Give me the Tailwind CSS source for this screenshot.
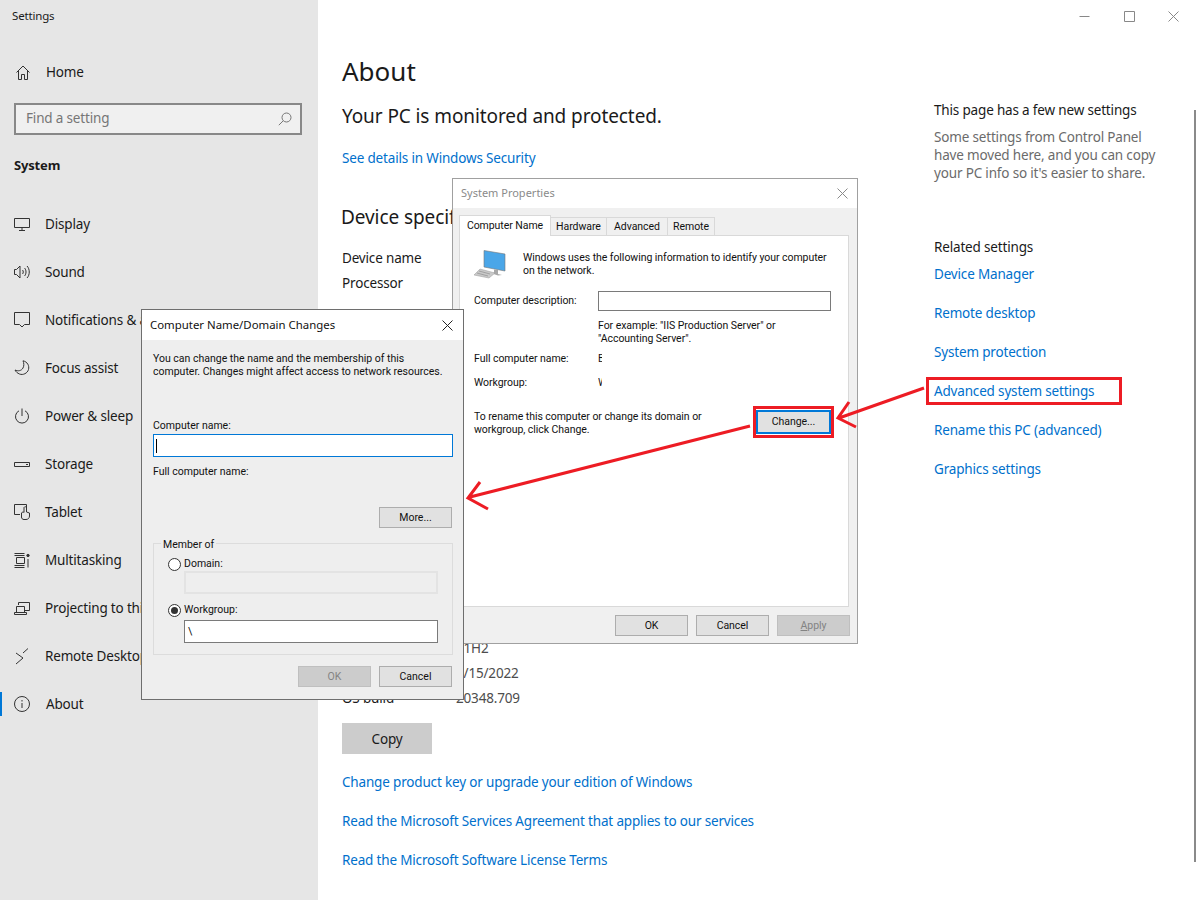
<!DOCTYPE html>
<html lang="en">
<head>
    <meta charset="UTF-8">
    <title>Settings - About</title>
    <script src="https://cdn.jsdelivr.net/npm/@tailwindcss/browser@4"></script>
</head>
<body class="relative w-[1197px] h-[900px] overflow-hidden flex bg-white text-[#1a1a1a] font-['Noto_Sans',sans-serif]">

    <!-- sidebar -->
    <aside class="w-[318px] h-[900px] shrink-0 bg-[#e6e6e6] text-[13.5px] tracking-[-0.17px]">
        <div class="h-[32px] pl-[12px] flex items-center text-[11.5px]">Settings</div>
        <div class="mt-[16px] h-[48px] pl-[16px] flex items-center gap-[16px]">
            <svg width="14" height="15" viewBox="0 0 14 15" fill="none" stroke="#333"><path d="M.5 7.5 7 1l6.5 6.5M2.5 6v8.5h3v-5h3v5h3V6"/></svg>
            <span>Home</span>
        </div>
        <div class="mt-[7px] ml-[14px] w-[288px] h-[32px] border-2 border-[#888] bg-[#f0f0f0] flex items-center justify-between pl-[10px] pr-[8px] text-[#767676]">
            <span class="-mt-[1px]">Find a setting</span>
            <svg width="14" height="14" viewBox="0 0 14 14" fill="none" stroke="#777"><circle cx="8.5" cy="5.5" r="4.5"/><path d="M5.2 8.8.8 13.2"/></svg>
        </div>
        <div class="mt-[21px] h-[20px] pl-[14px] flex items-center font-bold text-[13px]">System</div>
        <nav class="mt-[24px] flex flex-col">
            <a class="h-[48px] pl-[14px] flex items-center gap-[15px]">
                <svg width="16" height="13" viewBox="0 0 16 13" fill="none" stroke="#333"><path d="M.5.5h15v9H.5zM8 9.5v3M5 12.5h6"/></svg>
                <span>Display</span>
            </a>
            <a class="h-[48px] pl-[14px] flex items-center gap-[14px]">
                <svg width="17" height="14" viewBox="0 0 17 14" fill="none" stroke="#333"><path d="M.5 4.5h2L6 1v12L2.5 9.500h-2zM8.500 5c1 1 1 3 0 4M10.500 3c2 2 2 6 0 8M13 1c3 3 3 9 0 12"/></svg>
                <span>Sound</span>
            </a>
            <a class="h-[48px] pl-[14px] flex items-center gap-[14px] whitespace-nowrap">
                <svg width="17" height="16" viewBox="0 0 17 16" fill="none" stroke="#333"><path d="M.5.5h15v12h-5L8 15l-2.500-2.500h-5z"/></svg>
                <span>Notifications &amp; actions</span>
            </a>
            <a class="h-[48px] pl-[14px] flex items-center gap-[15px]">
                <svg width="16" height="16" viewBox="0 0 16 16" fill="none" stroke="#333"><path d="M9 .8c4.500 1 6.500 5 5.500 8.700-1 3.700-5.500 6-9 4.500C3.500 13.200 1.800 11.800 1 10c3 1.500 6.500.8 8-2 1.200-2.200 1-5-.0-7.200z"/></svg>
                <span>Focus assist</span>
            </a>
            <a class="h-[48px] pl-[14px] flex items-center gap-[15px]">
                <svg width="16" height="16" viewBox="0 0 16 16" fill="none" stroke="#333"><path d="M8 .5V8M5 2.800a6.500 6.500 0 1 0 6 0"/></svg>
                <span>Power &amp; sleep</span>
            </a>
            <a class="h-[48px] pl-[14px] flex items-center gap-[15px]">
                <svg width="16" height="7" viewBox="0 0 16 7" fill="none" stroke="#333"><path d="M.5 1.500h15v4H.5zM12 3.500h2"/></svg>
                <span>Storage</span>
            </a>
            <a class="h-[48px] pl-[14px] flex items-center gap-[14px]">
                <svg width="17" height="16" viewBox="0 0 17 16" fill="none" stroke="#333"><path d="M6 10.500H.5V.5h12v4M7.500 13V9c1-1.500 2-1 2.500-.5V3.500c.5-1 2-1 2.500 0V8l3 1v3c0 2-1.500 3.500-3.500 3.500h-2c-1.500 0-2.500-1-2.500-2.500z"/></svg>
                <span>Tablet</span>
            </a>
            <a class="h-[48px] pl-[14px] flex items-center gap-[15px]">
                <svg width="16" height="15" viewBox="0 0 16 15" fill="none" stroke="#333"><path d="M.5.500h10M.5 14.500h10M2.500 4.500h8v6h-8zM.5 2.500h10M.5 12.500h10M14 6v8.500"/><circle cx="14" cy="2.500" r="1.200" fill="#333"/></svg>
                <span>Multitasking</span>
            </a>
            <a class="h-[48px] pl-[14px] flex items-center gap-[15px] whitespace-nowrap">
                <svg width="16" height="13" viewBox="0 0 16 13" fill="none" stroke="#333"><path d="M4.500 3V.5h11v8H11M2.500 4.500h8v6h-8zM.5 12.500h12v-2H.5z"/></svg>
                <span>Projecting to this PC</span>
            </a>
            <a class="h-[48px] pl-[14px] flex items-center gap-[15px] whitespace-nowrap">
                <svg width="16" height="17" viewBox="0 0 16 17" fill="none" stroke="#333"><path d="m2 5 7 5-7 6M14 .5 9 5"/></svg>
                <span>Remote Desktop</span>
            </a>
            <a class="relative h-[48px] pl-[14px] flex items-center gap-[16px]">
                <span class="absolute left-0 top-[12px] w-[2px] h-[24px] bg-[#0078d7]"></span>
                <svg width="16" height="16" viewBox="0 0 16 16" fill="none" stroke="#333"><circle cx="8" cy="8" r="7.500"/><path d="M8 7v5M8 4v1.500"/></svg>
                <span>About</span>
            </a>
        </nav>
    </aside>

    <!-- main -->
    <main class="flex-1 flex text-[13.5px] tracking-[-0.17px]">
        <section class="w-[616px] shrink-0 pl-[24px] pt-[47px]">
            <h1 class="h-[48px] flex items-center text-[26px] tracking-normal">About</h1>
            <p class="mt-[5px] h-[32px] flex items-center text-[19px] tracking-[-0.09px]">Your PC is monitored and protected.</p>
            <a class="mt-[14px] h-[24px] flex items-center text-[#0070cc]">See details in Windows Security</a>
            <h2 class="mt-[31px] h-[32px] -ml-[1px] flex items-center text-[19px] tracking-[-0.09px]">Device specifications</h2>
            <div class="mt-[13px] h-[25px] flex items-center">Device name</div>
            <div class="h-[25px] flex items-center">Processor</div>
            <div class="mt-[340px] h-[25px] flex items-center"><span class="w-[114px]">Version</span><span class="text-[#4d4d4d]">21H2</span></div>
            <div class="h-[25px] flex items-center"><span class="w-[114px]">Installed on</span><span class="text-[#4d4d4d]">5/15/2022</span></div>
            <div class="h-[25px] flex items-center"><span class="w-[114px]">OS build</span><span class="text-[#4d4d4d]">20348.709</span></div>
            <button class="mt-[12px] w-[90px] h-[31px] pt-[1px] bg-[#cccccc] flex items-center justify-center">Copy</button>
            <a class="mt-[16px] h-[24px] flex items-center text-[#0070cc]">Change product key or upgrade your edition of Windows</a>
            <a class="mt-[15px] h-[24px] flex items-center text-[#0070cc]">Read the Microsoft Services Agreement that applies to our services</a>
            <a class="mt-[15px] h-[24px] flex items-center text-[#0070cc]">Read the Microsoft Software License Terms</a>
        </section>
        <section class="flex-1 pt-[100px]">
            <div class="h-[20px] flex items-center">This page has a few new settings</div>
            <p class="mt-[8px] leading-[18px] text-[#6b6b6b] w-[240px]">Some settings from Control Panel have moved here, and you can copy your PC info so it's easier to share.</p>
            <div class="mt-[55px] h-[20px] flex items-center">Related settings</div>
            <div class="mt-[5px] flex flex-col gap-[15px] text-[#0070cc]">
                <a class="h-[24px] flex items-center">Device Manager</a>
                <a class="h-[24px] flex items-center">Remote desktop</a>
                <a class="h-[24px] flex items-center">System protection</a>
                <a class="h-[24px] flex items-center">Advanced system settings</a>
                <a class="h-[24px] flex items-center">Rename this PC (advanced)</a>
                <a class="h-[24px] flex items-center">Graphics settings</a>
            </div>
        </section>
    </main>

    <!-- window controls + scrollbar -->
    <div class="absolute right-[1px] top-0 h-[32px] w-[134px] flex items-center text-[#777]">
        <div class="w-[45px] flex justify-center"><svg width="11" height="11" fill="none" stroke="#888"><path d="M.5 5.500h10"/></svg></div>
        <div class="w-[45px] flex justify-center"><svg width="11" height="11" fill="none" stroke="#888"><path d="M.5.500h10v10H.5z"/></svg></div>
        <div class="w-[45px] flex justify-center"><svg width="11" height="11" fill="none" stroke="#888"><path d="m.5.500 10 10M10.500.500l-10 10"/></svg></div>
    </div>
    <div class="absolute left-[1194px] top-[110px] w-[2px] h-[752px] bg-[#8a8a8a]"></div>

    <!-- System Properties -->
    <div class="absolute left-[452px] top-[178px] w-[406px] h-[466px] border border-[#a0a0a0] bg-[#f0f0f0] text-[10.5px] tracking-[-0.05px] text-[#111] font-['Roboto',sans-serif]">
        <div class="h-[29px] bg-white flex items-center justify-between pl-[8px] pr-[9px] text-[11px] tracking-normal text-[#8a8a8a] font-['Noto_Sans',sans-serif]">
            <span>System Properties</span>
            <svg width="11" height="11" fill="none" stroke="#8a8a8a"><path d="m.5.500 10 10M10.500.500l-10 10"/></svg>
        </div>
        <div class="px-[6px] pt-[7px]">
            <div class="flex items-end h-[21px] relative z-10 -mb-[1px]">
                <div class="w-[92px] h-[21px] bg-white border border-b-0 border-[#d9d9d9] flex items-center justify-center">Computer Name</div>
                <div class="w-[56px] h-[19px] bg-[#f0f0f0] border border-l-0 border-[#d9d9d9] flex items-center justify-center">Hardware</div>
                <div class="w-[61px] h-[19px] bg-[#f0f0f0] border border-l-0 border-[#d9d9d9] flex items-center justify-center">Advanced</div>
                <div class="w-[47px] h-[19px] bg-[#f0f0f0] border border-l-0 border-[#d9d9d9] flex items-center justify-center">Remote</div>
            </div>
            <div class="w-[390px] h-[372px] bg-white border border-[#d9d9d9] pl-[14px] pt-[14px]">
                <div class="flex leading-[13px]">
                    <svg class="w-[32px] h-[29px] shrink-0" viewBox="0 0 32 29">
                        <path d="M10 .500 31 4v17L10 17z" fill="#4aa6e8" stroke="#777" stroke-width=".6"/>
                        <path d="M24 20v4l4 1-4 .5-6-2 2-1v-3z" fill="#a8a8a8"/>
                        <path d="M6 19 21 23l-6 5L0 25z" fill="#c9c9c9" stroke="#9a9a9a" stroke-width=".5"/>
                        <path d="M5 21l11 3M3 23l11 3" stroke="#8f8f8f" stroke-width=".7"/>
                    </svg>
                    <p class="ml-[17px] mt-[1px] w-[310px]">Windows uses the following information to identify your computer on the network.</p>
                </div>
                <div class="mt-[12px] flex items-center h-[20px]">
                    <span class="w-[124px]">Computer description:</span>
                    <div class="w-[233px] h-[20px] border border-[#7a7a7a] bg-white"></div>
                </div>
                <p class="mt-[8px] ml-[124px] leading-[13px]">For example: "IIS Production Server" or<br>"Accounting Server".</p>
                <div class="mt-[7px] flex h-[13px] items-center">
                    <span class="w-[124px]">Full computer name:</span>
                    <span class="w-[4px] overflow-hidden">B</span>
                </div>
                <div class="mt-[11px] flex h-[13px] items-center">
                    <span class="w-[124px]">Workgroup:</span>
                    <span class="w-[4px] overflow-hidden">W</span>
                </div>
                <div class="mt-[21px] flex items-start justify-between pr-[17px]">
                    <p class="leading-[13px]">To rename this computer or change its domain or<br>workgroup, click Change.</p>
                    <button class="w-[75px] h-[24px] border-2 border-[#0078d7] bg-[#e1e1e1] flex items-center justify-center">Change...</button>
                </div>
            </div>
            <div class="mt-[8px] mr-[1px] flex justify-end gap-[8px]">
                <button class="w-[73px] h-[21px] pt-[1px] bg-[#e1e1e1] border border-[#adadad]">OK</button>
                <button class="w-[73px] h-[21px] pt-[1px] bg-[#e1e1e1] border border-[#adadad]">Cancel</button>
                <button class="w-[73px] h-[21px] pt-[1px] bg-[#cccccc] border border-[#bfbfbf] text-[#838383]"><u>A</u>pply</button>
            </div>
        </div>
    </div>

    <!-- Computer Name/Domain Changes -->
    <div class="absolute left-[141px] top-[309px] w-[323px] h-[391px] border border-[#6e6e6e] bg-[#eeeeee] text-[10.5px] text-[#111] font-['Roboto',sans-serif]">
        <div class="h-[30px] bg-white flex items-center justify-between pl-[8px] pr-[10px] font-['Noto_Sans',sans-serif]">
            <span class="text-[11.4px]">Computer Name/Domain Changes</span>
            <svg width="11" height="11" fill="none" stroke="#222"><path d="m.5.500 10 10M10.500.500l-10 10"/></svg>
        </div>
        <div class="px-[11px]">
            <p class="mt-[12px] leading-[13px] whitespace-nowrap">You can change the name and the membership of this<br>computer. Changes might affect access to network resources.</p>
            <div class="mt-[41px] h-[13px] flex items-center">Computer name:</div>
            <div class="mt-[2px] w-[300px] h-[23px] border border-[#0078d7] bg-white flex items-center pl-[2px]"><span class="w-[1px] h-[14px] bg-black"></span></div>
            <div class="mt-[8px] h-[13px] flex items-center">Full computer name:</div>
            <div class="mt-[29px] flex justify-end">
                <button class="w-[73px] h-[21px] pt-[1px] bg-[#e1e1e1] border border-[#adadad]">More...</button>
            </div>
            <fieldset class="mt-[15px] w-[300px] h-[112px] border border-[#dcdcdc] relative pl-[14px]">
                <span class="absolute left-[7px] -top-[6px] px-[2px] bg-[#eeeeee] leading-[13px]">Member of</span>
                <div class="mt-[13px] flex items-center h-[14px] gap-[3px]">
                    <span class="w-[13px] h-[13px] rounded-full border border-[#333] bg-white"></span>
                    <span>Domain:</span>
                </div>
                <div class="ml-[16px] w-[254px] h-[23px] border-2 border-[#e3e3e3] bg-[#eeeeee]"></div>
                <div class="mt-[9px] flex items-center h-[14px] gap-[3px]">
                    <span class="w-[13px] h-[13px] rounded-full border border-[#333] bg-white flex items-center justify-center"><span class="w-[7px] h-[7px] rounded-full bg-[#333]"></span></span>
                    <span>Workgroup:</span>
                </div>
                <div class="mt-[3px] ml-[16px] w-[254px] h-[23px] border border-[#7a7a7a] bg-white flex items-center pl-[3px]">\</div>
            </fieldset>
            <div class="mt-[11px] flex justify-end gap-[8px]">
                <button class="w-[73px] h-[21px] pt-[1px] bg-[#cccccc] border border-[#bfbfbf] text-[#838383]">OK</button>
                <button class="w-[73px] h-[21px] pt-[1px] bg-[#e1e1e1] border border-[#adadad]">Cancel</button>
            </div>
        </div>
    </div>

    <!-- red annotations -->
    <svg class="absolute inset-0 pointer-events-none" width="1197" height="900" fill="none" stroke="#ed1c24" stroke-width="3">
        <path d="M754.500 407.500h78v29h-78zM927.500 378.500h193v25h-193z"/>
        <path d="M924 388 839 418M849 402l-11 16 18 9"/>
        <path d="M750 426 470 497M480 482l-12 16 20 11"/>
    </svg>
</body>
</html>
